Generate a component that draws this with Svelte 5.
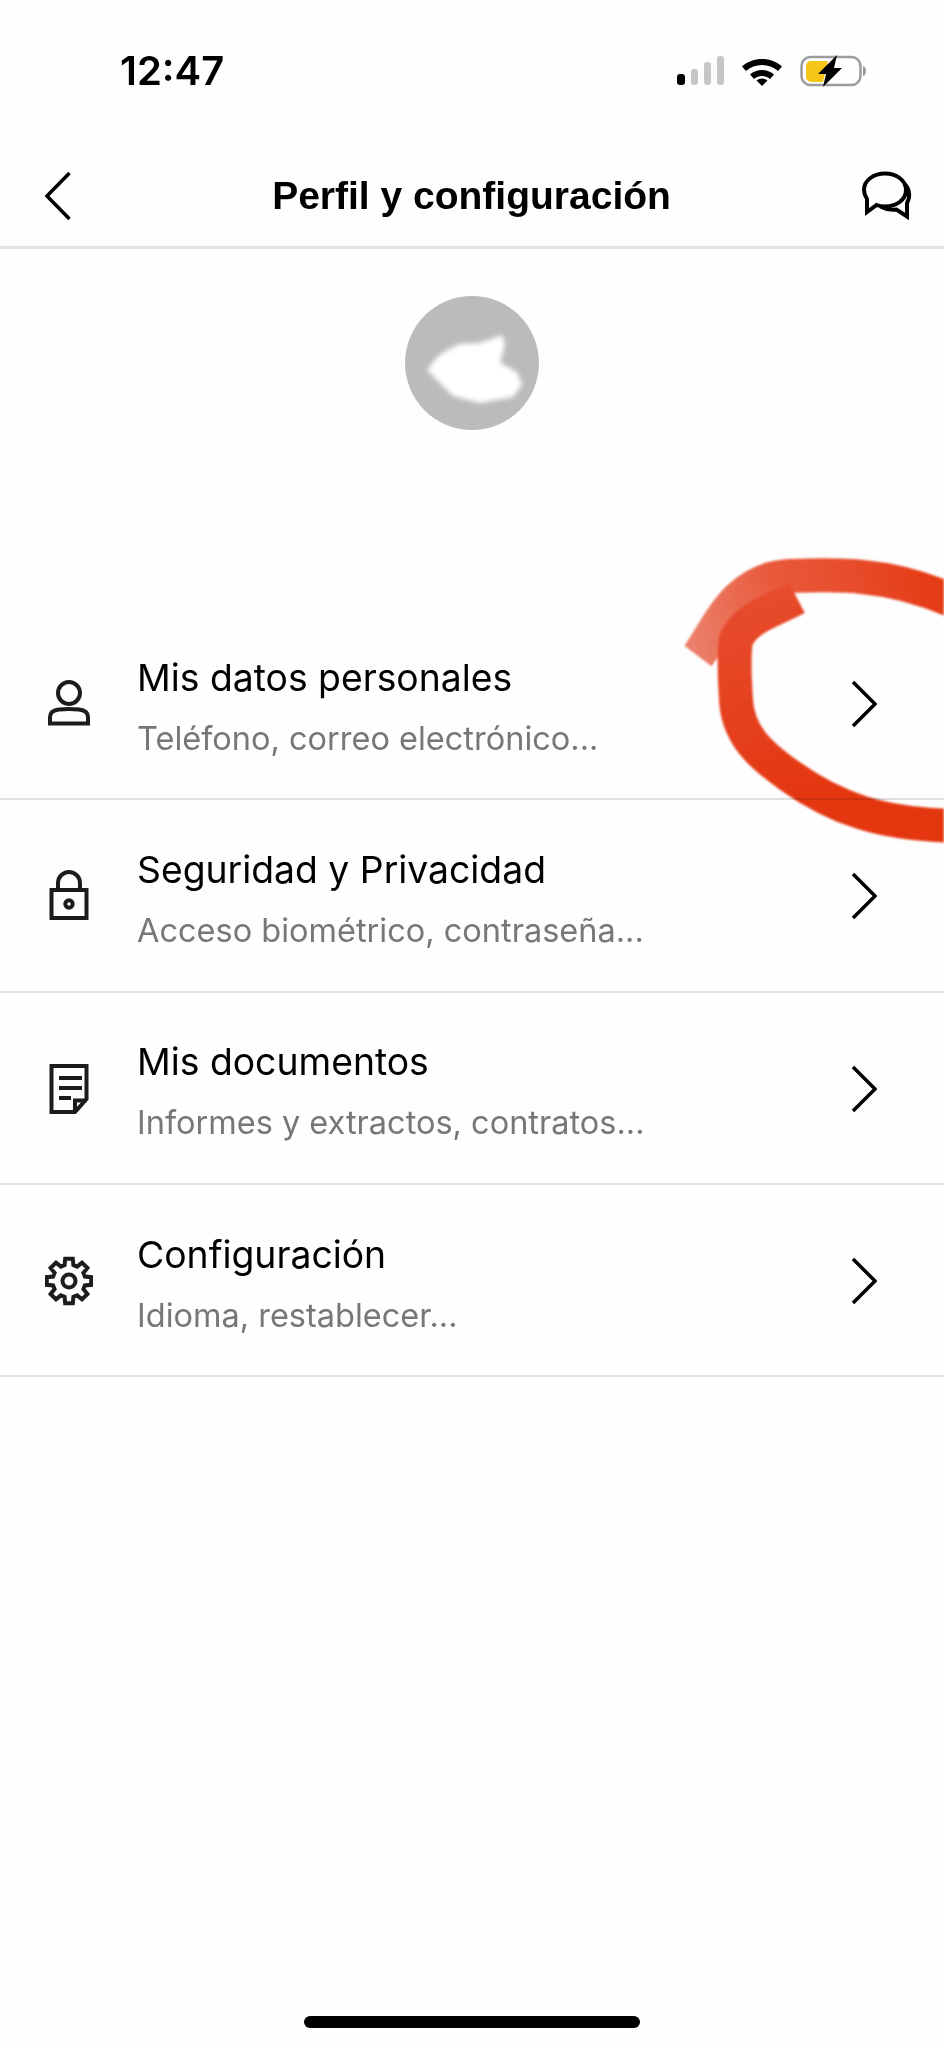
<script>
  const rows = [
    { icon: 'person', title: 'Mis datos personales', sub: 'Teléfono, correo electrónico...' },
    { icon: 'lock', title: 'Seguridad y Privacidad', sub: 'Acceso biométrico, contraseña...' },
    { icon: 'doc', title: 'Mis documentos', sub: 'Informes y extractos, contratos...' },
    { icon: 'gear', title: 'Configuración', sub: 'Idioma, restablecer...' }
  ];

  // 8 tooth cog outline, centred on 24,24
  function gearPath() {
    const pts = [];
    for (let i = 0; i < 8; i++) {
      const a = (i * Math.PI) / 4 - Math.PI / 2;
      const p = (r, d) => {
        const t = a + d;
        return `${(24 + r * Math.cos(t)).toFixed(1)} ${(24 + r * Math.sin(t)).toFixed(1)}`;
      };
      pts.push(p(16.5, -0.27), p(22.5, -0.17), p(22.5, 0.17), p(16.5, 0.27));
    }
    return 'M' + pts.join('L') + 'Z';
  }
</script>

<div class="page">
  <div class="status">
    <span class="time">12:47</span>
    <div class="status-icons">
      <div class="signal">
        <i class="on s1"></i><i class="s2"></i><i class="s3"></i><i class="s4"></i>
      </div>
      <svg class="wifi" width="42" height="30" viewBox="0 0 42 30">
        <path d="M1 10.5C11.5 .5 30.5 .5 41 10.5L37 15C28.5 7 13.5 7 5 15Z" />
        <path d="M9 18.5C15.5 12.5 26.5 12.5 33 18.5L29 23C24.5 19 17.5 19 13 23Z" />
        <path d="M15.5 24.5C18.5 21.8 23.5 21.8 26.5 24.5L21 30Z" />
      </svg>
      <svg class="battery" width="68" height="34" viewBox="0 0 68 34">
        <rect x="1.500" y="3" width="59" height="28" rx="9" fill="none" stroke="#9c9c9c" stroke-width="2.500" />
        <path d="M63 12c4 .5 4 9.500 0 10z" fill="#9c9c9c" />
        <path d="M11 7h17l-5 21H11a5 5 0 0 1-5-5V12a5 5 0 0 1 5-5z" fill="#f5c518" />
        <path d="M37 1 18 20h8l-3 13 19-19h-8z" />
      </svg>
    </div>
  </div>

  <header class="nav">
    <svg width="26" height="50" viewBox="0 0 26 50" class="line">
      <path d="M24.500 2 2 25l22.500 23" />
    </svg>
    <h1>Perfil y configuración</h1>
    <svg width="50" height="50" viewBox="0 0 50 50" class="chat">
      <path d="M42.500 13C47 17 49 25 45 32L45 45.500 34.500 38.500C29 39.500 24 38.500 18.500 35.500" />
      <path d="M5 41V28C3 25 2 22 2 19 2 9 12 2.500 23 2.500S44 9 44 19 34 35.500 23 35.500C20 35.500 17 35 14.500 34Z" />
    </svg>
  </header>

  <section class="profile">
    <div class="avatar">
      <svg class="smudge" width="134" height="134" viewBox="0 0 134 134">
        <path d="M22 74 32 61 42 54 55 48 75 47 97 39 100 49 95 67 112 76 117 89 108 101 75 107 48 100 35 87Z" />
      </svg>
    </div>
    <div class="hidden-name"></div>
  </section>

  <ul class="list">
    {#each rows as row}
      <li>
        <div class="icon">
          {#if row.icon === 'person'}
            <svg width="48" height="52" viewBox="0 0 48 52">
              <circle cx="24" cy="15" r="11" />
              <path d="M5 45.500V39c0-5 5-7 9-7.500 6.500-.8 13.500-.8 20 0 4 .5 9 2.500 9 7.500v6.500z" />
            </svg>
          {:else if row.icon === 'lock'}
            <svg width="48" height="52" viewBox="0 0 48 52">
              <path d="M13 20V13a11 11 0 0 1 22 0v7" />
              <rect x="6.500" y="20" width="35" height="28" />
              <circle cx="24" cy="34" r="3.700" />
            </svg>
          {:else if row.icon === 'doc'}
            <svg width="48" height="52" viewBox="0 0 48 52">
              <path d="M6.500 3h35v33L30 49H6.500z" />
              <path d="M30 49V37.500h11.500" />
              <path d="M14 15h23M14 25h23M14 35h12" />
            </svg>
          {:else}
            <svg width="48" height="52" viewBox="0 0 48 48">
              <path d="{gearPath()}" />
              <circle cx="24" cy="24" r="6.500" />
            </svg>
          {/if}
        </div>
        <div class="text">
          <span class="title">{row.title}</span>
          <span class="sub">{row.sub}</span>
        </div>
        <svg class="chevron line" width="26" height="48" viewBox="0 0 26 48">
          <path d="M2 2l22 22L2 46" />
        </svg>
      </li>
    {/each}
  </ul>

  <div class="home"></div>

  <!-- hand drawn marker over the screenshot -->
  <svg class="marker" width="944" height="2048" viewBox="0 0 944 2048">
    <defs>
      <linearGradient id="fade" gradientUnits="userSpaceOnUse" x1="695" y1="650" x2="944" y2="590">
        <stop offset="0" stop-color="#ec7f69" />
        <stop offset="0.35" stop-color="#ea5a3c" />
        <stop offset="0.7" stop-color="#e84a28" />
        <stop offset="1" stop-color="#e63a12" />
      </linearGradient>
      <linearGradient id="fade2" gradientUnits="userSpaceOnUse" x1="740" y1="600" x2="800" y2="800">
        <stop offset="0" stop-color="#e84c2c" />
        <stop offset="0.6" stop-color="#e63f1c" />
        <stop offset="1" stop-color="#e53710" />
      </linearGradient>
    </defs>
    <path class="stroke" d="M698 656C716 632 734 578 790 576 820 575 845 575 862 577 895 580 925 588 960 604" stroke="url(#fade)" />
    <path class="stroke" d="M797 598C770 612 745 618 736 640 733 660 735 680 736 700 738 735 760 755 790 776 835 808 880 825 960 826" stroke="url(#fade2)" />
  </svg>
</div>

<style>
  :global(body) {
    margin: 0;
    background: #fefefe;
  }

  .page {
    position: relative;
    width: 944px;
    height: 2048px;
    overflow: hidden;
    background: #fefefe;
    color: #000;
    font-family: "Liberation Sans", Arial, sans-serif;
  }

  .status {
    height: 146px;
    padding: 47px 82px 0 120px;
    box-sizing: border-box;
    display: flex;
    justify-content: space-between;
    align-items: flex-start;
  }

  .time {
    font-family: Inter, sans-serif;
    font-size: 40px;
    font-weight: 600;
    line-height: 48px;
  }

  .status-icons {
    display: flex;
    align-items: flex-end;
    gap: 17px;
    margin-top: 7px;
  }

  .signal {
    display: flex;
    align-items: flex-end;
    gap: 6px;
    height: 30px;
    margin-bottom: 1px;
  }

  .signal i {
    display: block;
    width: 7px;
    border-radius: 3px;
    background: #c6c6c6;
  }

  .signal .on {
    width: 8px;
    background: #000;
  }

  .s1 { height: 11px; }
  .s2 { height: 16px; }
  .s3 { height: 23px; }
  .s4 { height: 29px; }

  .battery {
    margin: 0 -6px -2px 0;
  }

  .nav {
    height: 103px;
    padding: 2px 32px 3px 45px;
    box-sizing: border-box;
    display: flex;
    align-items: center;
    justify-content: space-between;
    border-bottom: 3px solid #e2e2e2;
  }

  h1 {
    margin: 0 0 0 10px;
    font-size: 39px;
    font-weight: 700;
  }

  .line path {
    fill: none;
    stroke: #000;
    stroke-width: 3.500;
  }

  .chat path {
    fill: none;
    stroke: #000;
    stroke-width: 4;
  }

  .profile {
    height: 359px;
    padding-top: 47px;
    box-sizing: border-box;
    display: flex;
    flex-direction: column;
    align-items: center;
  }

  .avatar {
    position: relative;
    width: 134px;
    height: 134px;
    border-radius: 50%;
    background: #bbb;
    overflow: hidden;
  }

  .smudge {
    display: block;
    fill: #fff;
    filter: blur(2.500px);
  }

  .hidden-name {
    width: 350px;
    height: 24px;
    margin: 48px 24px 0 0;
    background: #fdfdfd;
    filter: blur(2px);
  }

  .list {
    list-style: none;
    margin: 0;
    padding: 0;
  }

  li {
    height: 192.300px;
    padding: 0 67px 0 45px;
    box-sizing: border-box;
    display: flex;
    align-items: center;
    border-bottom: 2px solid #e0e0e0;
  }

  .icon {
    width: 48px;
    height: 52px;
    margin: 2px 44px 0 0;
  }

  .icon svg {
    display: block;
    fill: none;
    stroke: #1c1c1c;
    stroke-width: 4;
  }

  .chevron {
    margin-top: 2px;
  }

  .text {
    flex: 1;
    display: flex;
    flex-direction: column;
    gap: 19px;
    margin-top: 8px;
    font-family: Inter, sans-serif;
  }

  .title {
    font-size: 37.300px;
    line-height: 44px;
  }

  .sub {
    font-size: 32.500px;
    line-height: 40px;
    color: #777;
  }

  .home {
    position: absolute;
    left: 304px;
    bottom: 20px;
    width: 336px;
    height: 12px;
    border-radius: 6px;
    background: #000;
  }

  .marker {
    position: absolute;
    inset: 0;
    mix-blend-mode: multiply;
    pointer-events: none;
    filter: blur(1.200px);
  }

  .stroke {
    fill: none;
    stroke-width: 34;
    stroke-linejoin: round;
  }
</style>
